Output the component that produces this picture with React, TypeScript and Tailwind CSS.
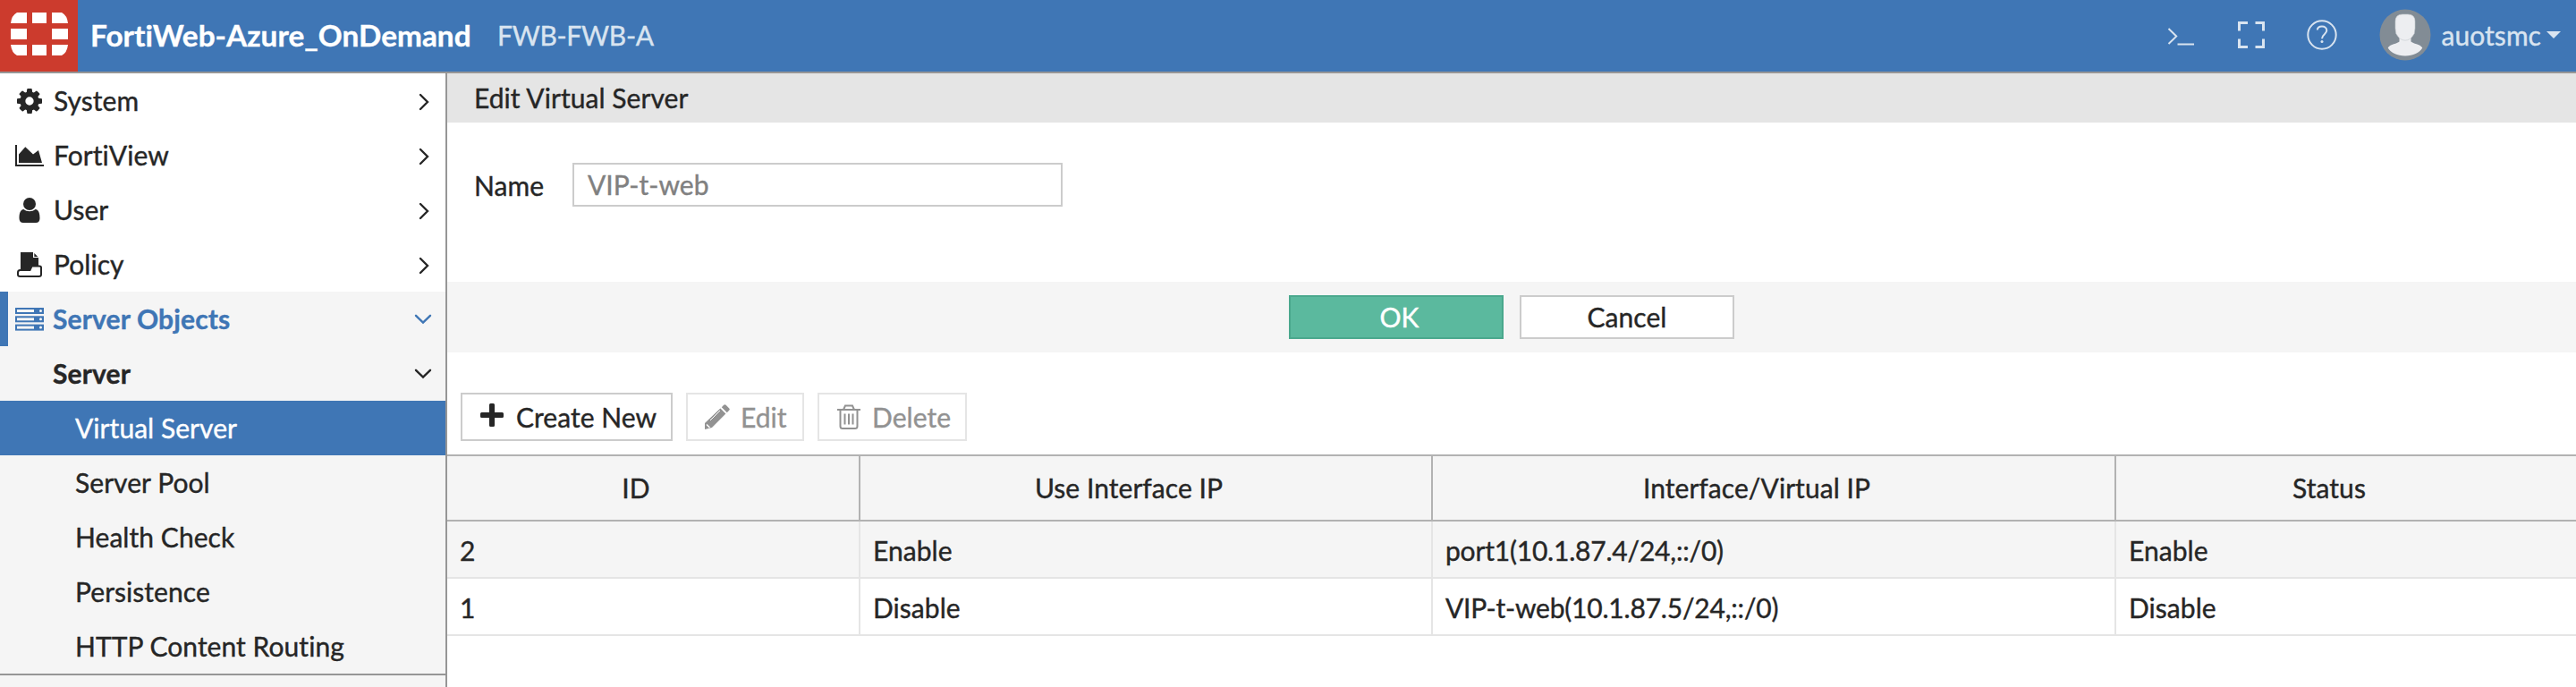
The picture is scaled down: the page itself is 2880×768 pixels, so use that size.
import { ReactNode } from "react";

const Chevron = ({ down, color = "#262626" }: { down?: boolean; color?: string }) =>
  down ? (
    <svg width="20" height="12" viewBox="0 0 20 12" fill="none" stroke={color} strokeWidth="2.4" strokeLinecap="round">
      <path d="M2 1.8 L10 9.6 L18 1.8" />
    </svg>
  ) : (
    <svg width="12" height="20" viewBox="0 0 12 20" className="mt-[3px]" fill="none" stroke={color} strokeWidth="2.4" strokeLinecap="round">
      <path d="M2 2 L10 10 L2 18" />
    </svg>
  );

const GearIcon = () => (
  <svg width="28" height="28" viewBox="0 0 1536 1536" fill="#262626">
    <path d="M1024 768q0-106-75-181t-181-75-181 75-75 181 75 181 181 75 181-75 75-181zm512-109v222q0 12-8 23t-20 13l-185 28q-19 54-39 91 35 50 107 138 10 12 10 25t-9 23q-27 37-99 108t-94 71q-12 0-26-9l-138-108q-44 23-91 38-16 136-29 186-7 28-36 28h-222q-14 0-24.500-8.500t-11.500-21.500l-28-184q-49-16-90-37l-141 107q-10 9-25 9-14 0-25-11-126-114-165-168-7-10-7-23 0-12 8-23 15-21 51-66.500t54-70.500q-27-50-41-99l-183-27q-13-2-21-12.500t-8-23.500v-222q0-12 8-23t19-13l186-28q14-46 39-92-40-57-107-138-10-12-10-24 0-10 9-23 26-36 98.500-107.500t94.500-71.500q13 0 26 10l138 107q44-23 91-38 16-136 29-186 7-28 36-28h222q14 0 24.500 8.500t11.500 21.500l28 184q49 16 90 37l142-107q9-9 24-9 13 0 25 10 129 119 165 170 7 8 7 22 0 12-8 23-15 21-51 66.500t-54 70.500q26 50 41 98l183 28q13 2 21 12.500t8 23.500z" />
  </svg>
);

const ChartIcon = () => (
  <svg width="32" height="24" viewBox="0 0 32 24" fill="#262626">
    <path d="M0 0h2v22h30v2H0z" />
    <path d="M4 20V10.500L11.300 2.200 20 10.500 26 6 30 20z" />
  </svg>
);

const UserIcon = () => (
  <svg width="24" height="28" viewBox="0 0 24 28" fill="#262626">
    <circle cx="12" cy="7" r="7" />
    <path d="M5.500 13C1.500 13.300.5 18 .5 23c0 3 1.500 5 4.500 5h14c3 0 4.500-2 4.500-5 0-5-1-9.700-5-10C16.500 14.300 14.500 15.300 12 15.300S7.500 14.300 5.500 13z" />
  </svg>
);

const PolicyIcon = () => (
  <svg width="28" height="28" viewBox="0 0 28 28">
    <path d="M4 0h14v6h6v9h-8l-2 5H4z" fill="#262626" />
    <path d="M19.300 1l4 4h-4z" fill="#262626" />
    <path d="M4 20H3.500Q1 20 1 22.500V25q0 2 2.500 2h21q2.500 0 2.500-2v-8q0-1.500-2-1.500h-8.500L14.500 20z" fill="#fff" stroke="#262626" strokeWidth="2" />
  </svg>
);

const ServersIcon = () => (
  <svg width="32" height="26" viewBox="0 0 32 26">
    {[0, 9.3, 18.6].map((y) => (
      <g key={y}>
        <rect x="0" y={y} width="32" height="7" fill="#3f76b5" />
        <rect x="2" y={y + 2} width="19" height="3" fill="#f5f5f5" />
        <circle cx="28.500" cy={y + 3.5} r="1.500" fill="#f5f5f5" />
      </g>
    ))}
  </svg>
);

const LogoIcon = () => (
  <svg width="64" height="48" viewBox="0 0 64 48" fill="#fff">
    <path d="M18 0v12H0Q1 3 7 0zM24 0h16v12H24zM46 0h11q6 3 7 12H46zM0 18h18v12H0zM46 18h18v12H46zM0 36h18v12H7Q1 45 0 36zM24 36h16v12H24zM46 36h18q-1 9-7 12H46z" />
  </svg>
);

const items: { label: string; icon: ReactNode }[] = [
  { label: "System", icon: <GearIcon /> },
  { label: "FortiView", icon: <ChartIcon /> },
  { label: "User", icon: <UserIcon /> },
  { label: "Policy", icon: <PolicyIcon /> },
];

const subItems = ["Server Pool", "Health Check", "Persistence", "HTTP Content Routing"];

const rows = [
  ["2", "Enable", "port1(10.1.87.4/24,::/0)", "Enable"],
  ["1", "Disable", "VIP-t-web(10.1.87.5/24,::/0)", "Disable"],
];

export default function App() {
  return (
    <div className="flex h-[768px] w-[2880px] flex-col overflow-hidden bg-white font-['Lato',sans-serif] text-[30px] leading-[36px] tracking-[0.05px] text-[#262626] [-webkit-text-stroke:0.4px]">
      <header className="flex h-[82px] shrink-0 items-center border-b-2 border-[#969696] bg-[#3f76b5]">
        <div className="flex h-[80px] w-[87px] items-center justify-center bg-[#cc3b2d] pb-1">
          <LogoIcon />
        </div>
        <h1 className="ml-[14px] w-[455px] pb-[2px] text-[33.3px] font-bold text-white">FortiWeb-Azure_OnDemand</h1>
        <span className="pb-[2px] text-[30px] tracking-[-0.3px] text-[#d9e4f0]">FWB-FWB-A</span>
        <div className="ml-auto flex items-center pb-[2px] pr-[17px] text-[#d9e4f0]">
          <svg width="30" height="22" viewBox="0 0 30 22" className="mt-1" fill="none" stroke="#d9e4f0" strokeWidth="2">
            <path d="M1.500 2l8.700 8.600L1.500 19M11.500 19.500H30" />
          </svg>
          <svg width="30" height="30" viewBox="0 0 30 30" className="ml-[49px]" fill="none" stroke="#d9e4f0" strokeWidth="3">
            <path d="M1.500 10.500V1.500H11M19.500 1.500h9v9M28.500 19.500v9h-9M11 28.500H1.500v-9" />
          </svg>
          <svg width="34" height="34" viewBox="0 0 34 34" className="ml-[47px]" fill="none" stroke="#d9e4f0" strokeWidth="2">
            <circle cx="17" cy="17" r="15.700" />
            <path d="M11.800 11.500C12 9 14 7.600 17 7.600s5.300 1.800 5.300 4.500c0 4.200-5.300 4-5.300 9.200" />
            <circle cx="17" cy="24.500" r="1.500" fill="#d9e4f0" stroke="none" />
          </svg>
          <svg width="58" height="58" viewBox="0 0 58 58" className="ml-[47px]">
            <circle cx="29" cy="29" r="28.500" fill="#828c95" />
            <path d="M22.500 30v6.500C20 39 12.500 39 9.700 43.500 13 49 20 52.500 29 52.500S45 49 48.300 43.500C45.500 39 38 39 35.500 36.500V30z" fill="#edeef1" />
            <path d="M18 14Q18 6 26 6h6q8 0 8 8v7.500l-.8 6Q35 35.200 29 35.200T18.800 27.500l-.8-6z" fill="#edeef1" stroke="#c5cacf" strokeWidth=".6" />
          </svg>
          <span className="ml-[12px]">auotsmc</span>
          <svg width="16" height="8" viewBox="0 0 16 8" className="ml-[6px]" fill="#d9e4f0">
            <path d="M0 0h16L8 8z" />
          </svg>
        </div>
      </header>

      <div className="flex min-h-0 flex-1">
        <nav className="flex w-[500px] shrink-0 flex-col border-r-2 border-[#969696] bg-[#f5f5f5]">
          {items.map((it) => (
            <div key={it.label} className="flex h-[61px] shrink-0 items-center bg-white pr-[18px]">
              <div className="flex w-[60px] justify-center pl-[6px]">{it.icon}</div>
              <span className="flex-1 pb-[2px]">{it.label}</span>
              <Chevron />
            </div>
          ))}
          <div className="flex h-[61px] shrink-0 items-center border-l-[9px] border-[#3f76b5] pr-[15px] font-bold text-[#3f76b5]">
            <div className="flex w-[50px] pl-[8px]">
              <ServersIcon />
            </div>
            <span className="flex-1 pb-[2px] tracking-[0.15px]">Server Objects</span>
            <Chevron down color="#3f76b5" />
          </div>
          <div className="flex h-[61px] shrink-0 items-center pl-[59px] pr-[15px] font-bold">
            <span className="flex-1 pb-[2px] tracking-[0.15px]">Server</span>
            <Chevron down />
          </div>
          <div className="flex h-[61px] shrink-0 items-center bg-[#3f76b5] pb-[2px] pl-[84px] text-white">Virtual Server</div>
          {subItems.map((s) => (
            <div key={s} className="flex h-[61px] shrink-0 items-center pb-[2px] pl-[84px]">
              {s}
            </div>
          ))}
          <div className="h-[2px] shrink-0 bg-[#969696]" />
        </nav>

        <main className="flex min-w-0 flex-1 flex-col">
          <div className="flex h-[55px] shrink-0 items-center bg-[#e5e5e5] pb-[2px] pl-[30px]">Edit Virtual Server</div>
          <div className="flex h-[178px] shrink-0 items-start pl-[30px] pt-[45px]">
            <label className="w-[110px] pt-[7px]">Name</label>
            <div className="flex h-[49px] w-[548px] items-center border-2 border-[#ccc] pb-px pl-[15px] text-[#808080]">VIP-t-web</div>
          </div>
          <div className="flex h-[79px] shrink-0 items-center justify-center gap-[18px] bg-[#f5f5f5]">
            <button className="h-[49px] w-[240px] border-2 border-[#4aa88d] bg-[#5bb99e] pb-[2px] pl-[7px] text-white">OK</button>
            <button className="h-[49px] w-[240px] border-2 border-[#ccc] bg-white pb-[2px]">Cancel</button>
          </div>
          <div className="flex h-[114px] shrink-0 items-start gap-[15px] pl-[15px] pt-[45px]">
            <button className="flex h-[54px] w-[237px] items-center border-2 border-[#ccc] pl-[20px]">
              <svg width="26" height="26" viewBox="0 0 26 26" className="mb-1" fill="#262626">
                <path d="M11.500 0h3Q16 0 16 1.500V10h8.500Q26 10 26 11.500v3Q26 16 24.500 16H16v8.500Q16 26 14.500 26h-3Q10 26 10 24.500V16H1.500Q0 16 0 14.500v-3Q0 10 1.500 10H10V1.500Q10 0 11.500 0z" />
              </svg>
              <span className="ml-[14px]">Create New</span>
            </button>
            <button className="flex h-[54px] w-[132px] items-center border-2 border-[#e5e5e5] pl-[19px] text-[#929292]">
              <svg width="28" height="28" viewBox="0 0 28 28" fill="#929292">
                <path d="M18.800 3.200L21.200.8q1.200-1.200 2.400 0l3.600 3.600q1.200 1.200 0 2.400L24.800 9.200zM17.400 4.600l6 6L8 26l-8 2 0-7z" />
                <path d="M2 22.500l3.500 3.500" stroke="#fff" strokeWidth="1.500" />
                <path d="M6 18L17 7" stroke="#fff" strokeWidth="1" />
              </svg>
              <span className="ml-[12px]">Edit</span>
            </button>
            <button className="flex h-[54px] w-[167px] items-center border-2 border-[#e5e5e5] pl-[20px] text-[#929292]">
              <svg width="26" height="28" viewBox="0 0 26 28" fill="none" stroke="#929292" strokeWidth="2">
                <path d="M0 6h26M7 6l2-4.500h8L19 6M3.500 6v18.500q0 2.500 2.500 2.500h14q2.500 0 2.500-2.500V6M8.500 10.500v12M13 10.500v12M17.500 10.500v12" />
              </svg>
              <span className="ml-[13px]">Delete</span>
            </button>
          </div>
          <div className="grid h-[75px] shrink-0 grid-cols-[462px_640px_764px_1fr] border-y-2 border-[#b2b2b2] bg-[#f5f5f5]">
            {["ID", "Use Interface IP", "Interface/Virtual IP", "Status"].map((h) => (
              <div key={h} className="flex items-center justify-center border-r-2 border-[#b2b2b2] pb-[2px] pr-[38px] last:border-r-0">
                {h}
              </div>
            ))}
          </div>
          {rows.map((r, n) => (
            <div
              key={r[0]}
              className={`grid h-[64px] shrink-0 grid-cols-[462px_640px_764px_1fr] border-b-2 border-[#e5e5e5] ${
                n % 2 ? "bg-white" : "bg-[#f5f5f5]"
              }`}
            >
              {r.map((c, i) => (
                <div
                  key={i}
                  className={`flex items-center border-r-2 border-[#e5e5e5] pl-[14px] pt-[2px] last:border-r-0 ${
                    i === 2 ? "tracking-[-0.2px]" : ""
                  }`}
                >
                  {c}
                </div>
              ))}
            </div>
          ))}
        </main>
      </div>
    </div>
  );
}
